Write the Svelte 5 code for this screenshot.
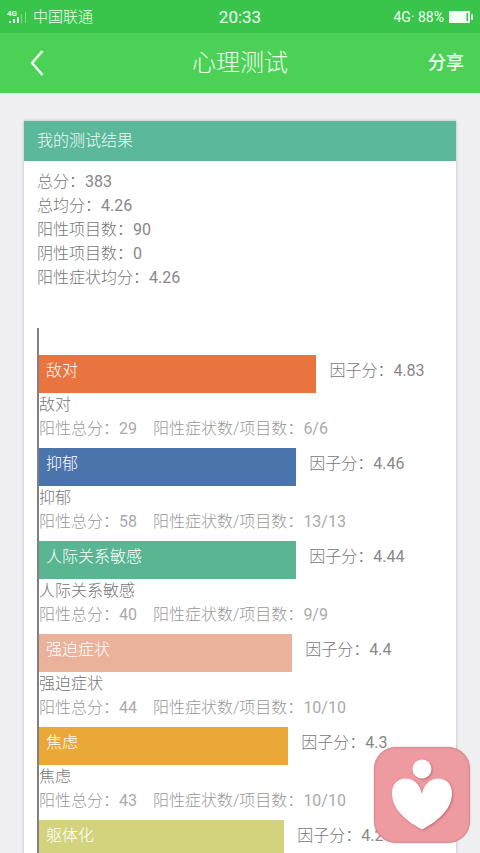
<script>
  const MAX_SCORE = 7;

  const summary = [
    { label: "总分", value: "383" },
    { label: "总均分", value: "4.26" },
    { label: "阳性项目数", value: "90" },
    { label: "阴性项目数", value: "0" },
    { label: "阳性症状均分", value: "4.26" },
  ];

  const factors = [
    { name: "敌对", score: 4.83, total: 29, items: "6/6", color: "#ea743f" },
    { name: "抑郁", score: 4.46, total: 58, items: "13/13", color: "#4b74ac" },
    { name: "人际关系敏感", score: 4.44, total: 40, items: "9/9", color: "#59b592" },
    { name: "强迫症状", score: 4.4, total: 44, items: "10/10", color: "#eab29a" },
    { name: "焦虑", score: 4.3, total: 43, items: "10/10", color: "#e9a837" },
    { name: "躯体化", score: 4.25, total: 51, items: "12/12", color: "#d3d37d" },
  ];

  function barWidth(score) {
    return `${Math.ceil((score / MAX_SCORE) * 100)}%`;
  }
</script>

<div class="screen">
  <div class="status">
    <div class="status-left">
      <svg class="signal" width="21" height="16" viewBox="0 0 21 16" aria-hidden="true">
        <text x="0" y="7" font-size="8" font-weight="700" fill="#e6fae8">4G</text>
        <g fill="#e6fae8">
          <rect x="2" y="12" width="2" height="2" />
          <rect x="6" y="10" width="2" height="4" />
          <rect x="10" y="8" width="2" height="6" />
        </g>
        <g fill="#7fdc89">
          <rect x="14" y="5" width="1" height="9" />
          <rect x="18" y="3" width="1" height="11" />
        </g>
      </svg>
      <span class="carrier">中国联通</span>
    </div>
    <span class="clock">20:33</span>
    <div class="status-right">
      <span>4G· 88%</span>
      <svg width="24" height="12" viewBox="0 0 24 12" aria-hidden="true">
        <rect x="0" y="0" width="21" height="12" rx="1" fill="#f4fff4" />
        <rect x="17.500" y="2" width="1.500" height="8" fill="#39c54b" />
        <rect x="22" y="3" width="2" height="6" rx="1" fill="#e6fae8" />
      </svg>
    </div>
  </div>

  <header class="navbar">
    <button type="button" class="back" aria-label="返回">
      <svg width="14" height="26" viewBox="0 0 14 26" fill="none" stroke="currentColor" stroke-width="2.6">
        <path d="M12.500 1 L2 13 L12.500 25" stroke-linejoin="round" />
      </svg>
    </button>
    <h1>心理测试</h1>
    <button type="button" class="share">分享</button>
  </header>

  <main>
    <section class="card">
      <h2>我的测试结果</h2>
      <div class="card-body">
        {#each summary as row (row.label)}
          <p>{row.label}：<span class="num">{row.value}</span></p>
        {/each}

        <div class="chart">
          {#each factors as factor (factor.name)}
            <div class="factor">
              <div class="bar-row">
                <div
                  class="bar"
                  style:width={barWidth(factor.score)}
                  style:background={factor.color}
                >
                  {factor.name}
                </div>
                <span class="score">因子分：<span class="num">{factor.score}</span></span>
              </div>
              <p>{factor.name}</p>
              <p class="detail">
                <span>阳性总分：<span class="num">{factor.total}</span></span>
                <span>阳性症状数/项目数：<span class="num">{factor.items}</span></span>
              </p>
            </div>
          {/each}
        </div>
      </div>
    </section>
  </main>

  <button type="button" class="float" aria-label="心理咨询">
    <svg viewBox="0 0 96 96" aria-hidden="true">
      <circle cx="48" cy="22" r="9.500" />
      <path
        d="M48 47 C46 37 39 31.500 32 31.500 C23 31.500 18 38 18 46 C18 61 30 73 48 82.500 C66 73 78 61 78 46 C78 38 73 31.500 64 31.500 C57 31.500 50 37 48 47 Z"
      />
    </svg>
  </button>
</div>

<style>
  :global(body) {
    margin: 0;
    background: #f0f0f2;
  }

  .screen {
    height: 100vh;
    overflow: hidden;
    font-family: Roboto, "Noto Sans CJK SC", sans-serif;
    font-size: 16px;
    font-weight: 300;
    line-height: 24px;
    color: #777;
  }

  h1,
  h2,
  p {
    margin: 0;
    font-weight: inherit;
  }

  button {
    border: none;
    padding: 0;
    background: none;
    font: inherit;
    color: inherit;
    cursor: pointer;
  }

  .num {
    font-weight: 400;
    color: #888;
  }

  .status,
  .navbar {
    display: grid;
    grid-template-columns: 1fr auto 1fr;
    align-items: center;
    color: #effcf0;
  }

  .status {
    height: 33px;
    padding: 0 7px;
    background: #39c54b;
    font-size: 14px;
    font-weight: 400;
  }

  .status-left,
  .status-right {
    display: flex;
    align-items: center;
    gap: 5px;
  }

  .status-right {
    justify-content: flex-end;
  }

  .carrier {
    font-size: 15px;
    font-weight: 300;
  }

  .clock {
    font-size: 17px;
  }

  .navbar {
    height: 60px;
    padding: 0 16px;
    background: #4bd156;
  }

  .back {
    display: flex;
    justify-self: start;
    padding: 0 14px;
  }

  h1 {
    font-size: 24px;
    line-height: 36px;
  }

  .share {
    justify-self: end;
    font-size: 18px;
    font-weight: 500;
  }

  main {
    padding: 28px 24px;
  }

  .card {
    background: #fff;
    box-shadow: 0 0 3px rgba(0, 0, 0, 0.25);
  }

  h2 {
    padding: 8px 13px;
    background: #5bb89a;
    color: #effaf6;
    font-size: 16px;
  }

  .card-body {
    padding: 9px 15px 9px 13px;
  }

  .chart {
    display: flex;
    flex-direction: column;
    gap: 7px;
    margin-top: 38px;
    padding-top: 27px;
    border-left: 2px solid #808080;
  }

  .bar-row {
    display: flex;
    gap: 13px;
    line-height: 32px;
  }

  .bar {
    box-sizing: border-box;
    flex-shrink: 0;
    height: 38px;
    padding-left: 7px;
    color: #fff;
  }

  .score {
    white-space: nowrap;
  }

  .detail {
    display: flex;
    gap: 16px;
    color: #999;
  }

  .detail .num {
    color: #aaa;
  }

  .float {
    position: fixed;
    right: 10px;
    bottom: 10px;
    width: 96px;
    height: 96px;
    border-radius: 22px;
    background: #ed9ba0;
    box-shadow:
      inset 0 0 2px rgba(120, 50, 60, 0.5),
      0 0 2px rgba(120, 50, 60, 0.3);
  }

  .float svg {
    display: block;
    width: 100%;
    fill: #fff;
    filter: drop-shadow(1px 1px 1px rgba(150, 60, 70, 0.5));
  }
</style>
